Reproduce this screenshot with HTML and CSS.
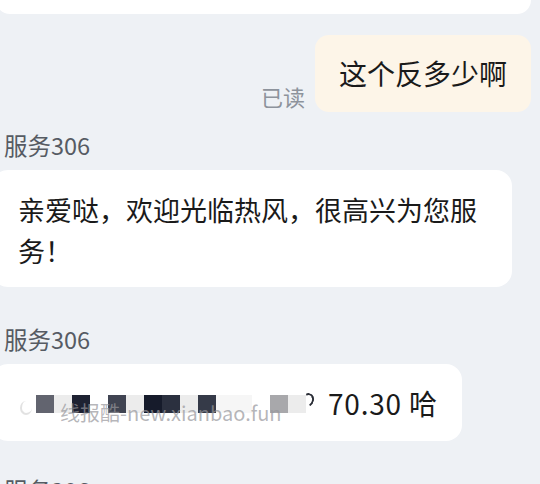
FILE: index.html
```html
<!DOCTYPE html>
<html lang="zh-CN">
<head>
  <meta charset="UTF-8" />
  <title>聊天记录</title>
  <link rel="stylesheet" href="styles.css">
</head>
<body>

  <div class="chat">

    <!-- message précédent, coupé en haut -->
    <div class="bubble bubble-cut"></div>

    <!-- message envoyé -->
    <div class="row-mine">
      <span class="read">已读</span>
      <div class="bubble-mine">这个反多少啊</div>
    </div>

    <div class="group first">
      <div class="name">服务306</div>
      <div class="bubble bubble-wide">亲爱哒，欢迎光临热风，很高兴为您服务！</div>
    </div>

    <div class="group">
      <div class="name">服务306</div>
      <div class="bubble bubble-price">
        <span class="arc-left"></span>
        <div class="mosaic">
          <span class="cell c1"></span>
          <span class="cell c-light"></span>
          <span class="cell c2"></span>
          <span class="cell"></span>
          <span class="cell c3"></span>
          <span class="cell c-light"></span>
          <span class="cell c4"></span>
          <span class="cell c5"></span>
          <span class="cell c-light"></span>
          <span class="cell c6"></span>
          <span class="cell c-faint"></span>
          <span class="cell c-faint"></span>
          <span class="cell"></span>
          <span class="cell c7"></span>
          <span class="cell c-light"></span>
        </div>
        <span class="arc"></span>
        <span class="price">70.30 哈</span>
        <span class="watermark">线报酷-new.xianbao.fun</span>
      </div>
    </div>

    <div class="group last">
      <div class="name">服务306</div>
    </div>

  </div>

</body>
</html>
```

FILE: styles.css
```css
* {
  margin: 0;
  padding: 0;
  box-sizing: border-box;
}

body {
  background: #eef1f5;
  font-family: "Noto Sans CJK SC", "Noto Sans", sans-serif;
  color: #1a1a1a;
  overflow: hidden;
  height: 484px;
}

.chat {
  padding: 0 9px 0 4px;
  display: flex;
  flex-direction: column;
}

/* BULLES */
.bubble {
  background: #fff;
  border-radius: 16px;
  margin-left: -12px;
}

.bubble-cut {
  height: 14px;
  width: 535px;
  margin-left: -8px;
  border-radius: 0 0 18px 18px;
}

/* MESSAGE ENVOYÉ */
.row-mine {
  display: flex;
  justify-content: flex-end;
  align-items: flex-end;
  gap: 10px;
  margin-top: 21px;
}

.read {
  font-size: 22px;
  line-height: 28px;
  color: #8d939c;
  margin-bottom: 2px;
}

.bubble-mine {
  background: #fdf5e8;
  border-radius: 14px;
  height: 77px;
  line-height: 77px;
  padding: 0 24px;
  font-size: 28px;
  white-space: nowrap;
}

/* MESSAGES REÇUS */
.group {
  margin-top: 37px;
}
.group.first {
  margin-top: 18px;
}
.group.last {
  margin-top: 34px;
}

.name {
  font-size: 23.5px;
  line-height: 30px;
  color: #565b63;
  margin-bottom: 10px;
}

.bubble-wide {
  width: 520px;
  padding: 19px 20px 16px 26px;
  font-size: 27px;
  line-height: 41px;
}

.bubble-price {
  position: relative;
  width: 470px;
  height: 77px;
  padding-left: 28px;
  display: flex;
  align-items: center;
}

.arc-left {
  width: 12px;
  height: 14px;
  margin-top: 10px;
  margin-right: 4px;
  border-left: 2px solid #e2e2e2;
  border-bottom: 2px solid #e2e2e2;
  border-radius: 50%;
}

.mosaic {
  display: flex;
  margin-top: 3px;
}

.cell {
  width: 18px;
  height: 18px;
}
.c1 { background: #62646f; }
.c2 { background: #1e2232; }
.c3 { background: #404452; }
.c4 { background: #161b2b; }
.c5 { background: #2b303f; }
.c6 { background: #353a48; }
.c7 { background: #a8a8ab; }
.c-light { background: #ececec; }
.c-faint { background: #f6f6f6; }

.arc {
  width: 12px;
  height: 14px;
  margin-left: -4px;
  margin-top: -6px;
  border: 2px solid #2a2d36;
  border-left-color: transparent;
  border-bottom-color: transparent;
  border-radius: 50%;
  transform: rotate(20deg);
}

.price {
  font-size: 28px;
  letter-spacing: 0.8px;
  margin-left: 14px;
}

.watermark {
  position: absolute;
  left: 68px;
  top: 37px;
  font-size: 20px;
  line-height: 24px;
  color: rgba(150, 150, 155, 0.7);
  white-space: nowrap;
}
```
